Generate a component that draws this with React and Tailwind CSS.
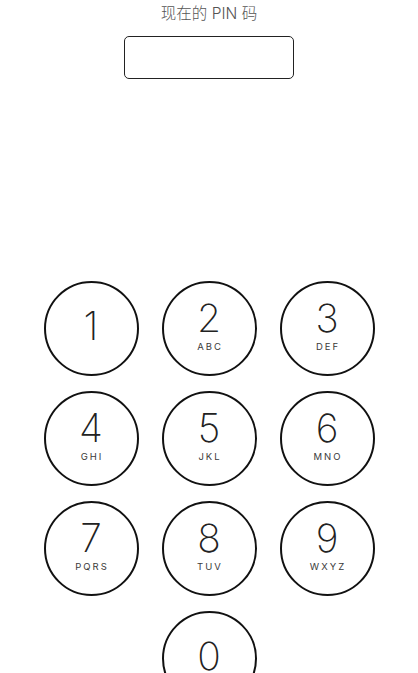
const keys = [
  { n: '1', l: '' },
  { n: '2', l: 'ABC' },
  { n: '3', l: 'DEF' },
  { n: '4', l: 'GHI' },
  { n: '5', l: 'JKL' },
  { n: '6', l: 'MNO' },
  { n: '7', l: 'PQRS' },
  { n: '8', l: 'TUV' },
  { n: '9', l: 'WXYZ' },
];

function Key({ n, l }) {
  return (
    <button className="w-[95px] h-[95px] rounded-full border-2 border-[#111] bg-white flex flex-col items-center justify-center">
      <span className="text-[39px] leading-[38px] font-extralight text-[#222] mt-[-6px]">{n}</span>
      {l && (
        <span className="text-[9.5px] leading-[10px] tracking-[2px] pl-[2px] text-[#3a3a3a] mt-[5px]">{l}</span>
      )}
    </button>
  );
}

export default function App() {
  return (
    <div className="w-[418px] h-[673px] bg-white overflow-hidden flex flex-col items-center" style={{ fontFamily: 'Inter, "Noto Sans CJK SC", sans-serif' }}>
      <p className="shrink-0 mt-[4px] text-[15.5px] leading-[20px] font-light text-[#555]">现在的 PIN 码</p>
      <div className="shrink-0 mt-[12px] w-[170px] h-[43px] border-[1.5px] border-[#222] rounded-[5px]" />
      <div className="shrink-0 mt-[202px] grid grid-cols-3 gap-x-[23px] gap-y-[15px]">
        {keys.map((k) => (
          <Key key={k.n} n={k.n} l={k.l} />
        ))}
        <div />
        <Key n="0" l="" />
      </div>
    </div>
  );
}
